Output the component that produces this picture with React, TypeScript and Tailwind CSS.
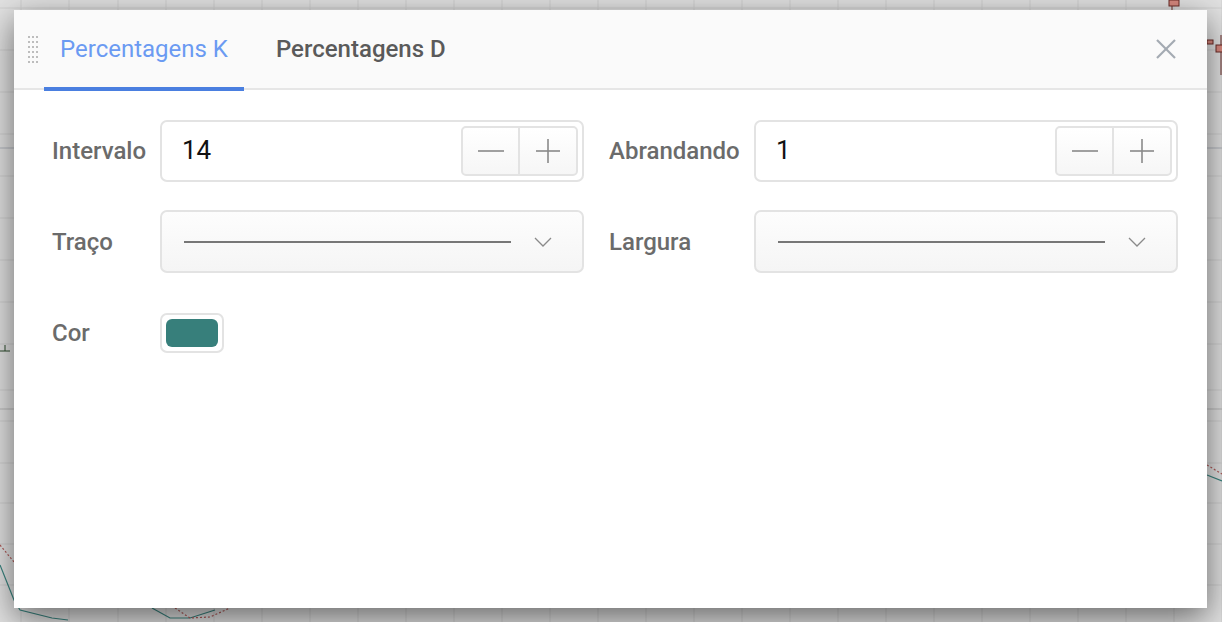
import React, { useState } from 'react';

const font = { fontFamily: 'Roboto, "Liberation Sans", sans-serif' };

const ChartBackdrop = () => {
    const vLines = [21, 69, 118, 166, 214, 262, 310, 358, 406, 454, 502, 550, 598, 646, 694, 742, 790, 838, 886, 934, 982, 1030, 1078, 1126, 1174, 1222];
    const hLines = [8, 50, 92, 134, 176, 218, 260, 302, 344, 390, 421, 463, 503, 544, 585];
    return (
        <svg className="absolute inset-0" width="1222" height="622" viewBox="0 0 1222 622">
            <rect width="1222" height="622" fill="#e2e2e2" />
            {vLines.map(x => <line key={'v' + x} x1={x} y1="0" x2={x} y2="622" stroke="#d0d0d0" strokeWidth="1" />)}
            {hLines.map(y => <line key={'h' + y} x1="0" y1={y} x2="1222" y2={y} stroke="#d0d0d0" strokeWidth="1" />)}
            <line x1="0" y1="409" x2="1222" y2="409" stroke="#b8b8b8" strokeWidth="1" />
            <line x1="0" y1="148" x2="1222" y2="148" stroke="#b0b4bc" strokeWidth="1" />
            <polyline points="0,565 14,600 20,610 52,618 68,620" fill="none" stroke="#3a8580" strokeWidth="1.2" />
            <polyline points="152,608 170,618 190,618 215,610" fill="none" stroke="#3a8580" strokeWidth="1.2" />
            <polyline points="0,545 14,562" fill="none" stroke="#b05a58" strokeWidth="1.2" strokeDasharray="2 2" />
            <polyline points="175,608 190,618 210,617 230,608" fill="none" stroke="#b05a58" strokeWidth="1.2" strokeDasharray="2 2" />
            <polyline points="1207,475 1222,481" fill="none" stroke="#3a8580" strokeWidth="1.2" />
            <polyline points="1207,465 1222,474" fill="none" stroke="#b05a58" strokeWidth="1.2" strokeDasharray="2 2" />
            <line x1="1172" y1="0" x2="1172" y2="10" stroke="#6a2a26" strokeWidth="1" />
            <rect x="1169" y="0" width="10" height="6" fill="#d9897f" stroke="#6a2a26" strokeWidth="1" />
            <rect x="1207" y="40" width="6" height="4" fill="#d9897f" stroke="#6a2a26" strokeWidth="1" />
            <line x1="1221" y1="35" x2="1221" y2="75" stroke="#6a2a26" strokeWidth="1" />
            <rect x="1216" y="45" width="8" height="7" fill="#d9897f" stroke="#6a2a26" strokeWidth="1" />
            <line x1="0" y1="351" x2="10" y2="351" stroke="#2a4a2a" strokeWidth="1" />
            <line x1="5" y1="345" x2="5" y2="351" stroke="#2a4a2a" strokeWidth="1" />
        </svg>
    );
};

const Stepper = () => (
    <div className="flex h-[50px] rounded-[5px] border-2 border-[#e3e3e3] bg-gradient-to-b from-white to-[#f6f6f6]">
        <button className="w-[57px] flex items-center justify-center border-r-2 border-[#e3e3e3]">
            <svg width="28" height="4" viewBox="0 0 28 4"><line x1="1" y1="2" x2="27" y2="2" stroke="#8a8a8a" strokeWidth="1.6" /></svg>
        </button>
        <button className="w-[56px] flex items-center justify-center">
            <svg width="28" height="28" viewBox="0 0 28 28">
                <line x1="2" y1="14" x2="26" y2="14" stroke="#8a8a8a" strokeWidth="1.6" />
                <line x1="14" y1="2" x2="14" y2="26" stroke="#8a8a8a" strokeWidth="1.6" />
            </svg>
        </button>
    </div>
);

const NumberField = ({ value }: { value: string }) => (
    <div className="h-[62px] rounded-[7px] border-2 border-[#e3e3e3] bg-white flex items-center justify-between pl-[20px] pr-[4px]">
        <span className="text-[26px] text-[#111]">{value}</span>
        <Stepper />
    </div>
);

const LineSelect = () => (
    <div className="h-[63px] rounded-[7px] border-2 border-[#e3e3e3] bg-gradient-to-b from-[#fdfdfd] to-[#f5f5f5] flex items-center pl-[22px] pr-[30px]">
        <div className="w-[327px] h-[2px] bg-[#777]" />
        <div className="flex-1" />
        <svg width="18" height="10" viewBox="0 0 18 10">
            <polyline points="1,1 9,9 17,1" fill="none" stroke="#8a8a8a" strokeWidth="1.3" />
        </svg>
    </div>
);

const Label = ({ children, className = '' }: { children: React.ReactNode; className?: string }) => (
    <div className={`text-[24px] font-medium text-[#6b6b6b] ${className}`}>{children}</div>
);

const App = () => {
    const [activeTab, setActiveTab] = useState<'k' | 'd'>('k');

    return (
        <div className="relative w-[1222px] h-[622px] overflow-hidden" style={font}>
            <ChartBackdrop />

            {/* settings dialog */}
            <div className="absolute left-[14px] top-[10px] w-[1193px] h-[598px] bg-white shadow-[0_10px_32px_rgba(0,0,0,0.55)] flex flex-col">
                <div className="h-[80px] bg-[#fafafa] border-b-2 border-[#e6e6e6] flex items-center pl-[14px] pr-[30px]">
                    <div className="grid grid-cols-3 gap-x-[2px] gap-y-[3px] mr-[6px]">
                        {Array.from({ length: 18 }).map((_, i) => (
                            <div key={i} className="w-[2px] h-[2px] bg-[#bdbdbd]" />
                        ))}
                    </div>
                    <div className="flex h-full gap-[16px]">
                        <button
                            onClick={() => setActiveTab('k')}
                            className={`relative h-full px-[16px] text-[24px] ${activeTab === 'k' ? 'text-[#6b9af2]' : 'text-[#5a5a5a] font-medium'}`}
                        >
                            Percentagens K
                            {activeTab === 'k' && <div className="absolute left-0 right-0 bottom-[-3px] h-[4px] bg-[#4a7fe0]" />}
                        </button>
                        <button
                            onClick={() => setActiveTab('d')}
                            className={`relative h-full px-[16px] text-[24px] ${activeTab === 'd' ? 'text-[#6b9af2]' : 'text-[#5a5a5a] font-medium'}`}
                        >
                            Percentagens D
                            {activeTab === 'd' && <div className="absolute left-0 right-0 bottom-[-3px] h-[4px] bg-[#4a7fe0]" />}
                        </button>
                    </div>
                    <div className="flex-1" />
                    <button className="w-[22px] h-[22px] flex items-center justify-center">
                        <svg width="22" height="22" viewBox="0 0 22 22">
                            <line x1="2" y1="2" x2="20" y2="20" stroke="#a3aab2" strokeWidth="2.2" />
                            <line x1="20" y1="2" x2="2" y2="20" stroke="#a3aab2" strokeWidth="2.2" />
                        </svg>
                    </button>
                </div>

                <div className="pl-[38px] pt-[15px] grid grid-cols-[108px_424px_170px_424px] auto-rows-[91px] items-center">
                    <Label>Intervalo</Label>
                    <NumberField value="14" />
                    <Label className="pl-[25px]">Abrandando</Label>
                    <NumberField value="1" />

                    <Label>Traço</Label>
                    <LineSelect />
                    <Label className="pl-[25px]">Largura</Label>
                    <LineSelect />

                    <Label>Cor</Label>
                    <div>
                        <div className="w-[64px] h-[40px] rounded-[7px] border-2 border-[#e3e3e3] bg-white p-[4px]">
                            <div className="w-full h-full rounded-[6px] bg-[#377f7b]" />
                        </div>
                    </div>
                </div>
            </div>
        </div>
    );
};

export default App;
